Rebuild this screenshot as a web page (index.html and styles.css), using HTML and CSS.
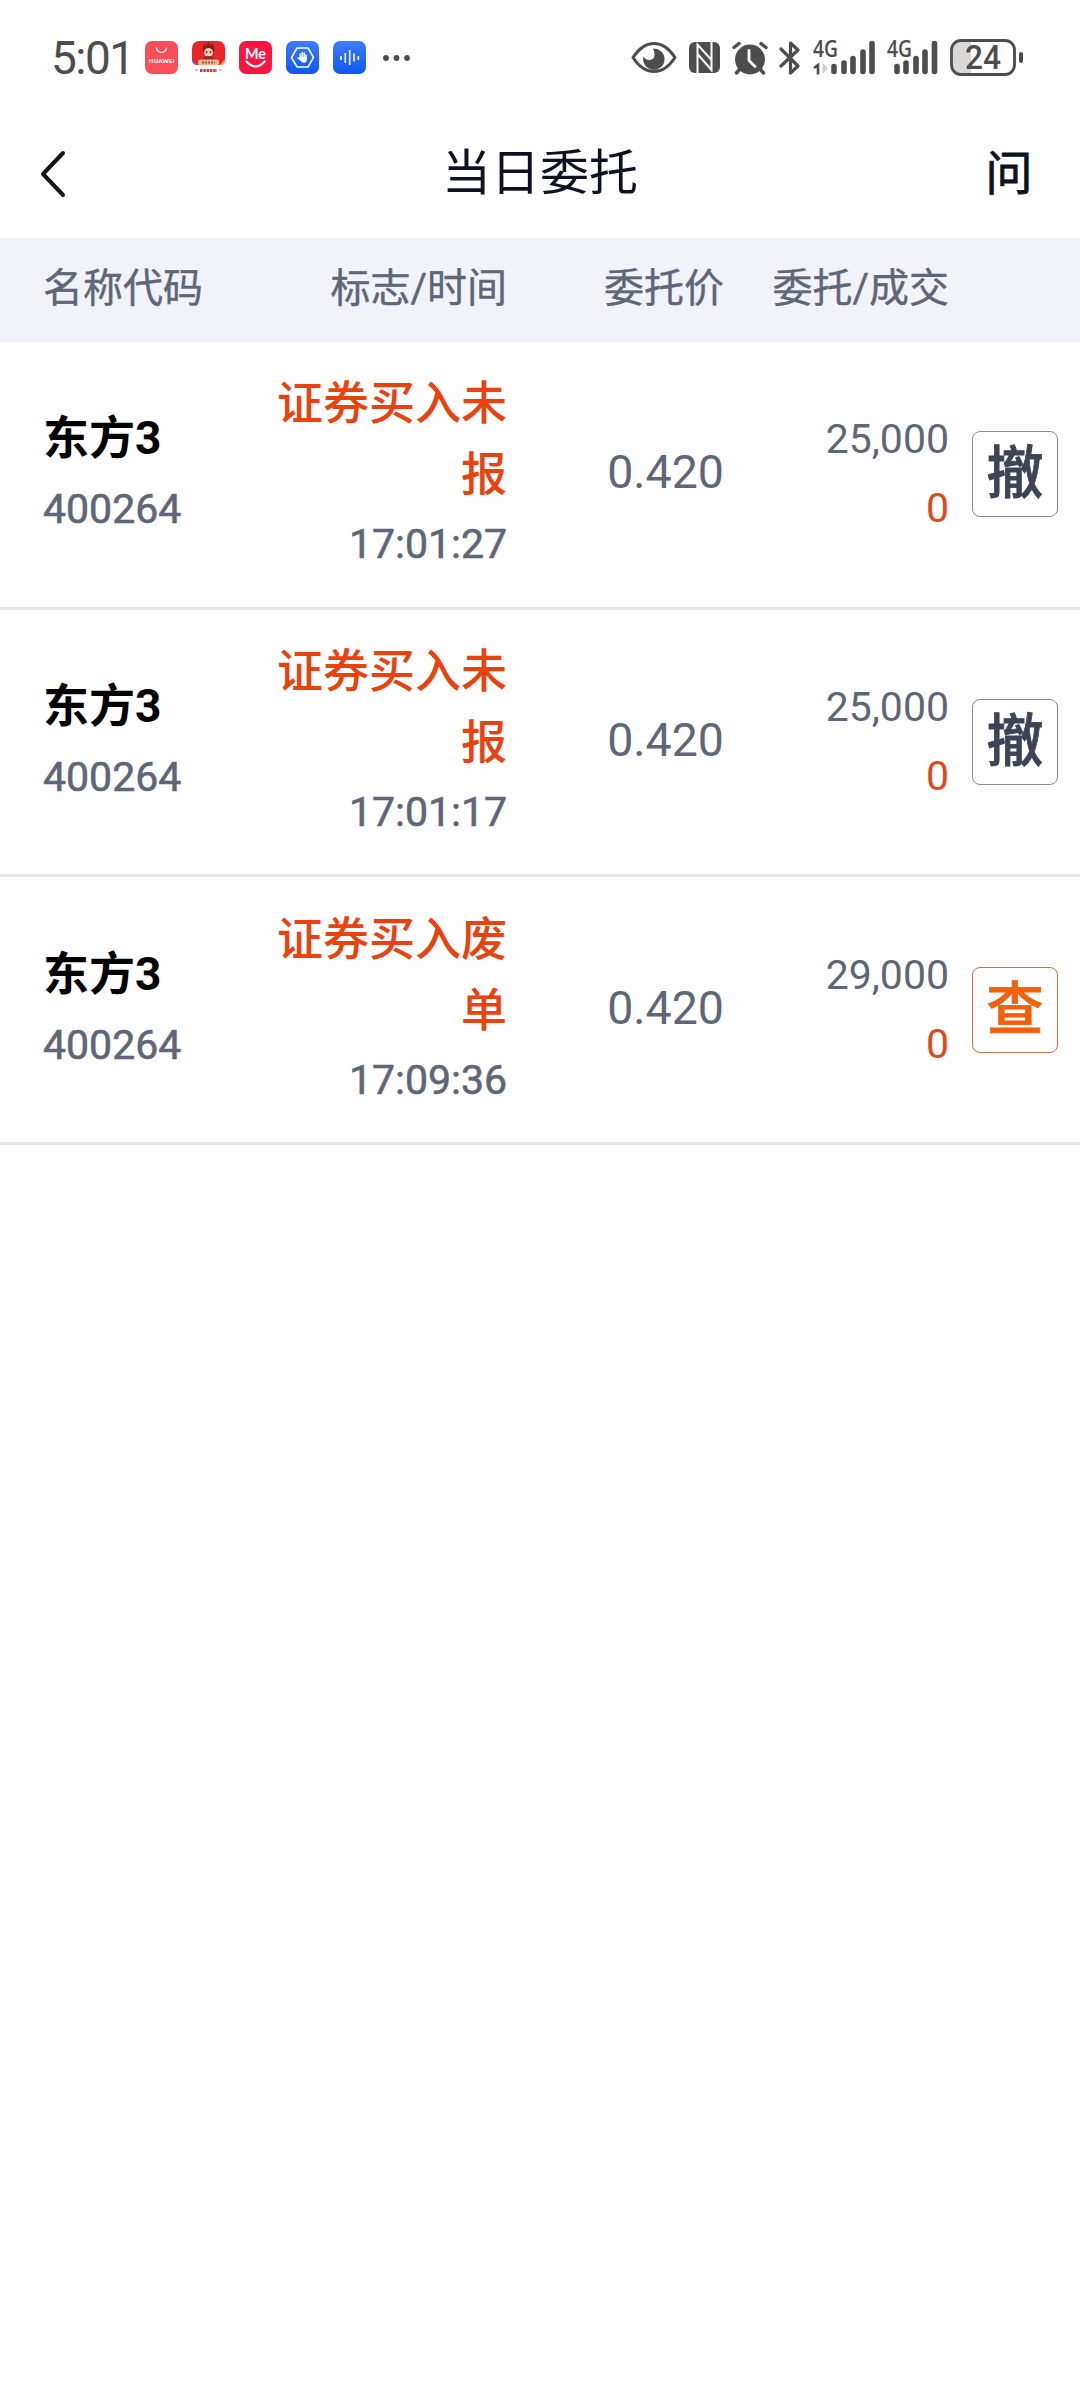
FILE: index.html
```
<!DOCTYPE html>
<html lang="zh-CN">
<head>
  <meta charset="UTF-8" />
  <title>当日委托</title>
  <link rel="stylesheet" href="styles.css">
</head>
<body>

<!-- Status bar -->
<div class="status-bar">
  <span class="clock">5:01</span>

  <div class="app-icons">
    <svg width="33" height="33" viewBox="0 0 33 33">
      <rect width="33" height="33" rx="7" fill="#fd4d58" />
      <path d="M11.500 6.500a5 5 0 0 0 10 0" fill="none" stroke="#fff" stroke-width="1.200" />
      <text x="16.500" y="21.500" class="tiny-text" textLength="26" lengthAdjust="spacingAndGlyphs">HUAWEI</text>
    </svg>
    <svg width="33" height="33" viewBox="0 0 33 33">
      <path d="M7 0h19a7 7 0 0 1 7 7v12q0 4-5 5H5q-5-1-5-5V7a7 7 0 0 1 7-7z" fill="#e9252b" />
      <path d="M0 19l5 5H3q-3-2-3-5z" fill="#3a8fd0" />
      <path d="M33 18l-5 6h3q2-2 2-6z" fill="#f2b632" />
      <path d="M11 8q0-5 5.500-5T22 8v3H11z" fill="#6b211b" />
      <path d="M12 3l2 3 2.500-4L19 6l2-3" fill="none" stroke="#8f2a1c" stroke-width="1.500" />
      <circle cx="16.500" cy="11.500" r="4.500" fill="#f4c8a8" />
      <path d="M14 11h1.500M17.800 11h1.500" stroke="#3b1a18" stroke-width="1.500" />
      <path d="M10 19q1-4 6.500-4t6.500 4z" fill="#8c2c22" />
      <rect x="6" y="18.500" width="21" height="6" rx="2" fill="#e9b98c" />
      <path d="M10 21.500h13" stroke="#a6523a" stroke-width="1.800" stroke-dasharray="2 1" />
      <path d="M8 29.500h17" stroke="#cf3c3f" stroke-width="3" stroke-dasharray="2.500 0.800" />
      <path d="M3 29h3M27 29h3" stroke="#8cc7cf" stroke-width="1.500" />
    </svg>
    <svg width="33" height="33" viewBox="0 0 33 33">
      <rect width="33" height="33" rx="7" fill="#fb1540" />
      <text x="16.500" y="17.500" class="me-text" textLength="21" lengthAdjust="spacingAndGlyphs">Me</text>
      <path d="M7.500 20.500q9 10 18 0" fill="none" stroke="#fff" stroke-width="2.200" stroke-linecap="round" />
    </svg>
    <svg width="33" height="33" viewBox="0 0 33 33">
      <defs>
        <linearGradient id="blue" x1="0" y1="0" x2="0" y2="1">
          <stop offset="0" stop-color="#3f7cf8" />
          <stop offset="1" stop-color="#0d59f2" />
        </linearGradient>
      </defs>
      <rect width="33" height="33" rx="7" fill="url(#blue)" />
      <path d="M11 7h11l5.500 9.500L22 26H11l-5.500-9.500z" fill="none" stroke="#fff" stroke-width="1.500" stroke-linejoin="round" />
      <path d="M14.200 18v-5M16.200 17v-5.500M18.200 17v-5M20 18v-4M14 18.500l-2-1.500" fill="none" stroke="#fff" stroke-width="1.500" stroke-linecap="round" />
      <path d="M13.500 16h7.300v2.500q0 3.200-3.300 3.200-2 0-4-3.200z" fill="#fff" />
    </svg>
    <svg width="33" height="33" viewBox="0 0 33 33">
      <rect width="33" height="33" rx="7" fill="url(#blue)" />
      <path d="M8 15v4M12.300 12v10M16.700 9v15M21 12.500v8M25.300 15v4" stroke="#fff" stroke-width="1.600" />
    </svg>
    <svg class="more-dots" width="27" height="6" viewBox="0 0 27 6" fill="#4d4d4d">
      <circle cx="3" cy="3" r="2.900" />
      <circle cx="13.500" cy="3" r="2.900" />
      <circle cx="24" cy="3" r="2.900" />
    </svg>
  </div>

  <div class="system-icons">
    <!-- eye comfort -->
    <svg width="46" height="33" viewBox="0 0 46 33">
      <path d="M2 16.500Q11 2.500 23 2.500t21 14Q35 30.500 23 30.500T2 16.500z" fill="none" stroke="#4d4d4d" stroke-width="3" stroke-linejoin="round" />
      <path d="M22 7.500a10.700 10.700 0 1 1-9.500 8q2.500 4 6.500 3.500 5-.8 4.500-6-.3-3-1.500-5.500z" fill="#4d4d4d" />
    </svg>
    <!-- nfc -->
    <svg width="31" height="33" viewBox="0 0 31 33">
      <rect y="1" width="31" height="31" rx="6" fill="#4d4d4d" />
      <path d="M8.500 32V3.500L22.500 19M22.500 1v28L8.500 13" fill="none" stroke="#fff" stroke-width="2" />
    </svg>
    <!-- alarm -->
    <svg width="36" height="34" viewBox="0 0 36 34">
      <circle cx="18" cy="18.500" r="15" fill="#4d4d4d" />
      <path d="M2 6.500l5-4M34 6.500l-5-4M7.500 28.500L4.500 32M28.500 28.500l3 3.500" stroke="#4d4d4d" stroke-width="3.500" stroke-linecap="round" />
      <path d="M17 9.500v10l6 6" fill="none" stroke="#fff" stroke-width="2.800" stroke-linecap="round" />
    </svg>
    <!-- bluetooth -->
    <svg width="22" height="34" viewBox="0 0 22 34">
      <path d="M2 8l17 17-7.500 7V2L19 9 2 25" fill="none" stroke="#4d4d4d" stroke-width="3.200" stroke-linecap="round" stroke-linejoin="round" />
    </svg>
    <!-- sim 1 -->
    <svg class="signal" width="63" height="42" viewBox="0 -6 63 42">
      <text x="0" y="18" class="net-text" textLength="25" lengthAdjust="spacingAndGlyphs">4G</text>
      <path d="M1 29l4-3v9.500" fill="none" stroke="#4d4d4d" stroke-width="2.600" />
      <path d="M9.500 24v11l5.500-5.500z" fill="#ccc" />
      <path d="M21 27.500v5M31 24v8.500M40 19.500v13M50 13v19.500M59 4.500v28" stroke="#4d4d4d" stroke-width="5.600" stroke-linecap="round" />
    </svg>
    <!-- sim 2 -->
    <svg class="signal" width="51" height="42" viewBox="0 -6 51 42">
      <text x="0" y="18" class="net-text" textLength="25" lengthAdjust="spacingAndGlyphs">4G</text>
      <path d="M10 27.500v5M19 24v8.500M29 19.500v13M38 13v19.500M47.500 4.500v28" stroke="#4d4d4d" stroke-width="5.600" stroke-linecap="round" />
    </svg>
    <!-- battery -->
    <svg width="74" height="37" viewBox="0 0 74 37">
      <path d="M11 2h10v33H11q-9 0-9-9V11q0-9 9-9z" fill="#d8d8d8" />
      <rect x="1.500" y="1.500" width="63" height="34" rx="9.500" fill="none" stroke="#4d4d4d" stroke-width="2.800" />
      <rect x="69" y="13" width="4" height="11" rx="2" fill="#4d4d4d" />
      <text x="33" y="30" class="battery-text" textLength="36" lengthAdjust="spacingAndGlyphs">24</text>
    </svg>
  </div>
</div>

<!-- Title bar -->
<div class="nav-bar">
  <svg class="back" width="26" height="48" viewBox="0 0 26 48">
    <path d="M23 3L3 24l20 21" fill="none" stroke="#111418" stroke-width="4" stroke-linecap="round" stroke-linejoin="round" />
  </svg>
  <div class="title">当日委托</div>
  <div class="ask">问</div>
</div>

<!-- Order list -->
<div class="row table-head">
  <div>名称代码</div>
  <div class="right">标志/时间</div>
  <div class="right">委托价</div>
  <div class="right">委托/成交</div>
</div>

<div class="row order">
  <div class="stock">
    <div class="name">东方3</div>
    <div class="code">400264</div>
  </div>
  <div class="state right">
    <div class="flag">证券买入未报</div>
    <div class="time">17:01:27</div>
  </div>
  <div class="price right">0.420</div>
  <div class="amount right">
    <div>25,000</div>
    <div class="deal">0</div>
  </div>
  <div class="btn">撤</div>
</div>

<div class="row order">
  <div class="stock">
    <div class="name">东方3</div>
    <div class="code">400264</div>
  </div>
  <div class="state right">
    <div class="flag">证券买入未报</div>
    <div class="time">17:01:17</div>
  </div>
  <div class="price right">0.420</div>
  <div class="amount right">
    <div>25,000</div>
    <div class="deal">0</div>
  </div>
  <div class="btn">撤</div>
</div>

<div class="row order">
  <div class="stock">
    <div class="name">东方3</div>
    <div class="code">400264</div>
  </div>
  <div class="state right">
    <div class="flag">证券买入废单</div>
    <div class="time">17:09:36</div>
  </div>
  <div class="price right">0.420</div>
  <div class="amount right">
    <div>29,000</div>
    <div class="deal">0</div>
  </div>
  <div class="btn btn-check">查</div>
</div>

</body>
</html>
```
FILE: styles.css
```
/* Page setup */
* {
  box-sizing: border-box;
}

body {
  margin: 0;
  width: 1080px;
  min-height: 2400px;
  background: #fefefe;
  font-family: Roboto, "Noto Sans CJK SC", sans-serif;
  color: #5f6677;
}

svg {
  display: block;
  flex-shrink: 0;
}

/* Status bar */
.status-bar {
  display: flex;
  align-items: center;
  height: 115px;
  padding: 0 56px 0 51px;
  color: #4d4d4d;
}

.clock {
  width: 94px;
  font-size: 46px;
  line-height: 50px;
  letter-spacing: -1.5px;
}

.app-icons {
  display: flex;
  align-items: center;
  gap: 14px;
}

.more-dots {
  margin-left: 3px;
}

.system-icons {
  display: flex;
  align-items: center;
  gap: 11.6px;
  margin-left: auto;
}

.signal {
  margin-bottom: 8px;
}

.tiny-text {
  font: bold 6px "Open Sans", sans-serif;
  fill: #fff;
  text-anchor: middle;
}

.me-text {
  font: bold 15px Lato, sans-serif;
  fill: #fff;
  text-anchor: middle;
}

.net-text {
  font: 600 23px "Open Sans", sans-serif;
  fill: #4d4d4d;
}

.battery-text {
  font: 500 33px Roboto, sans-serif;
  fill: #4d4d4d;
  text-anchor: middle;
}

/* Title bar */
.nav-bar {
  display: grid;
  grid-template-columns: 100px 1fr 100px;
  align-items: center;
  height: 123px;
  padding: 0 21px 5px 40px;
  color: #0d1220;
}

.title {
  padding-right: 19px;
  font-size: 49px;
  line-height: 70px;
  text-align: center;
}

.ask {
  font-size: 47px;
  line-height: 70px;
  text-align: center;
  -webkit-text-stroke: 0.8px #0d1220;
}

/* Shared columns for the head and the orders */
.row {
  display: grid;
  grid-template-columns: 206px 258px 217px 225px 86px;
  align-items: center;
  padding-left: 43px;
}

.right {
  text-align: right;
}

.table-head {
  height: 104px;
  background: #f2f3f8;
  font-size: 40px;
  line-height: 60px;
  padding-bottom: 2px;
  -webkit-text-stroke: 0.4px #5f6677;
}

/* Order row */
.order {
  height: 267.67px;
  border-bottom: 3px solid #e5e7ed;
}

.name {
  font-size: 46px;
  line-height: 71px;
  font-weight: 700;
  color: #000;
}

.code,
.time {
  font-size: 41px;
  line-height: 71px;
  -webkit-text-stroke: 0.6px #5f6677;
}

.time {
  margin-top: -1px;
}

.flag {
  padding-left: 20px;
  font-size: 46px;
  line-height: 71px;
  font-weight: 500;
  color: #e8430f;
}

.price {
  font-size: 46.500px;
  line-height: 71px;
  padding-bottom: 3px;
}

.amount {
  font-size: 41px;
  line-height: 69px;
}

.deal {
  color: #dc4a1c;
}

.btn {
  width: 86px;
  height: 86px;
  margin-left: 23px;
  border: 1.5px solid #868c9b;
  border-radius: 8px;
  font-size: 57px;
  line-height: 84px;
  font-weight: 500;
  text-align: center;
  color: #3d4456;
  -webkit-text-stroke: 0.8px #3d4456;
}

.btn-check {
  border-color: #cf7040;
  color: #f45f0a;
  -webkit-text-stroke-color: #f45f0a;
}
```
